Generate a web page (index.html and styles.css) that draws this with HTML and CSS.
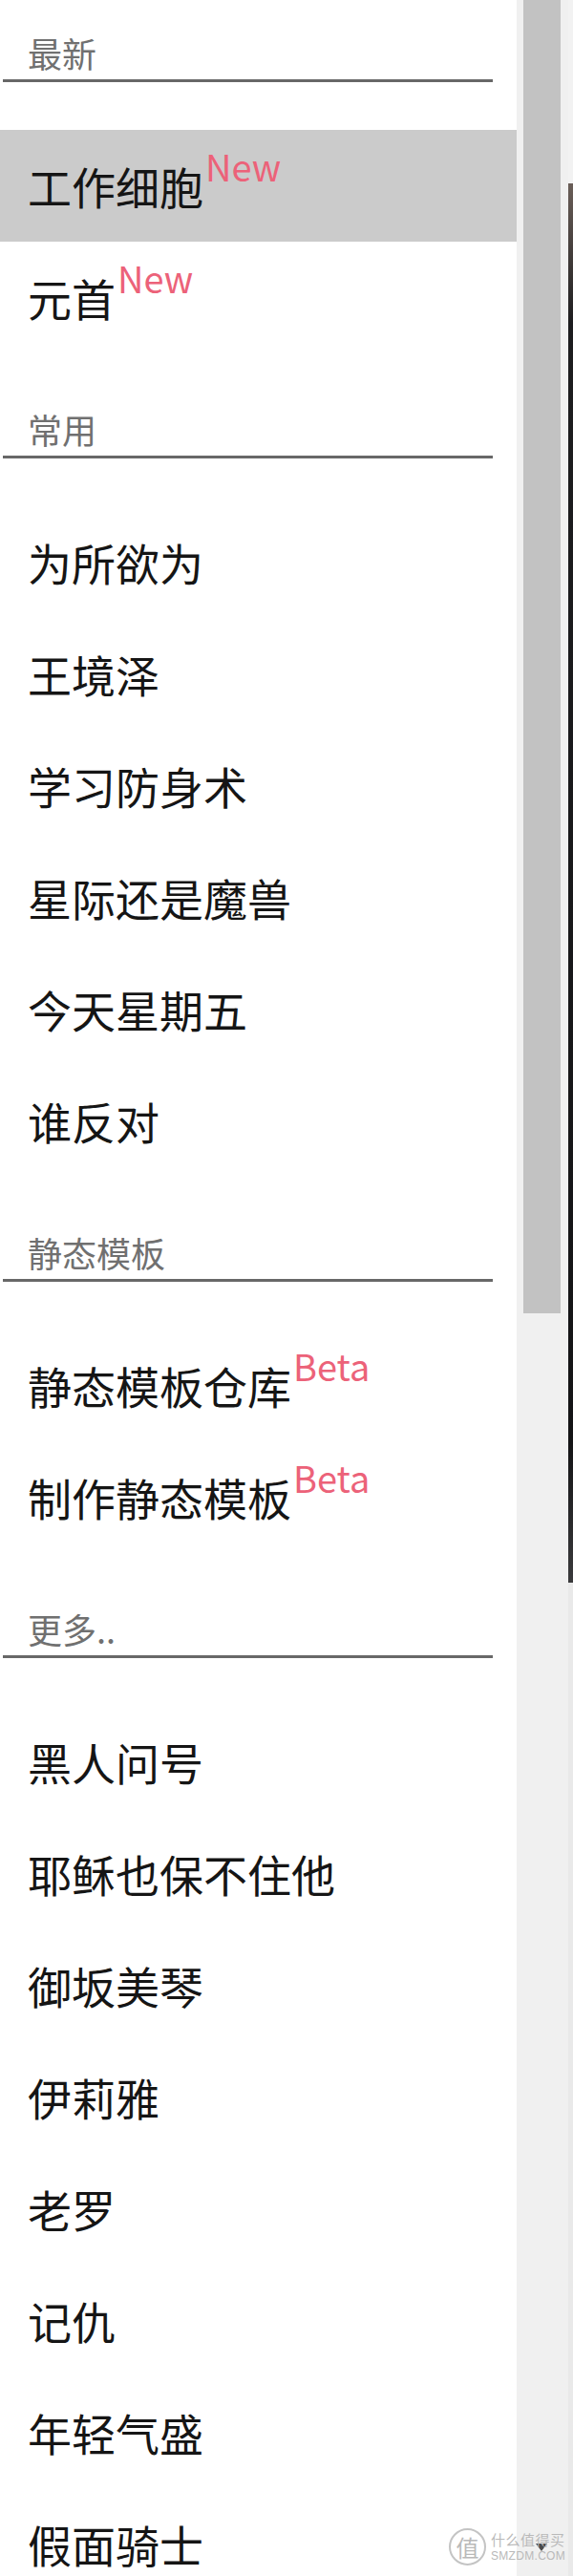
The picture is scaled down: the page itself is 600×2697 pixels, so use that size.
FILE: index.html
```html
<!DOCTYPE html>
<html lang="zh-CN">

<head>
    <meta charset="UTF-8">
    <meta name="viewport" content="width=device-width, initial-scale=1.0">
    <title>菜单</title>
    <link rel="stylesheet" href="styles.css">
</head>

<body>

    <div class="menu">
        <div class="group-title first">最新</div>
        <div class="item active">工作细胞<sup class="tag">New</sup></div>
        <div class="item">元首<sup class="tag">New</sup></div>

        <div class="group-title">常用</div>
        <div class="item">为所欲为</div>
        <div class="item">王境泽</div>
        <div class="item">学习防身术</div>
        <div class="item">星际还是魔兽</div>
        <div class="item">今天星期五</div>
        <div class="item">谁反对</div>

        <div class="group-title">静态模板</div>
        <div class="item">静态模板仓库<sup class="tag">Beta</sup></div>
        <div class="item">制作静态模板<sup class="tag">Beta</sup></div>

        <div class="group-title">更多..</div>
        <div class="item">黑人问号</div>
        <div class="item">耶稣也保不住他</div>
        <div class="item">御坂美琴</div>
        <div class="item">伊莉雅</div>
        <div class="item">老罗</div>
        <div class="item">记仇</div>
        <div class="item">年轻气盛</div>
        <div class="item">假面骑士</div>
    </div>

    <!-- 滚动条 -->
    <div class="scrollbar">
        <div class="thumb"></div>
        <div class="arrow"></div>
    </div>

    <!-- 背后页面露出的一条 -->
    <div class="edge">
        <div class="edge-top"></div>
        <div class="edge-dark"></div>
        <div class="edge-rest"></div>
    </div>

    <!-- 水印 -->
    <div class="watermark">
        <span class="wm-logo">值</span>
        <span class="wm-text">
            <span class="wm-cn">什么值得买</span>
            <span class="wm-en">SMZDM.COM</span>
        </span>
    </div>

</body>

</html>
```

FILE: styles.css
```css
html,
body {
    margin: 0;
    height: 2697px;
    overflow: hidden;
    background: #fff;
}

body {
    display: flex;
    position: relative;
    font-family: "Noto Sans CJK SC", "Noto Sans", sans-serif;
}

.menu {
    width: 541px;
    flex: none;
    background: #fff;
}

.group-title {
    margin: 0 25px 50px 3px;
    padding: 51px 0 0 26px;
    height: 56px;
    line-height: 56px;
    font-size: 36px;
    color: #707070;
    border-bottom: 3px solid #686868;
}

.group-title.first {
    padding-top: 27px;
}

.item {
    height: 117px;
    line-height: 117px;
    padding-left: 29px;
    font-size: 46px;
    color: #151515;
    white-space: nowrap;
}

.item.active {
    background-color: #cbcbcb;
}

.tag {
    font-size: 38px;
    line-height: 0;
    vertical-align: 24px;
    margin-left: 2px;
    color: #ec6279;
}

.scrollbar {
    width: 47px;
    flex: none;
    padding-left: 7px;
    background: #f0f0f0;
    display: flex;
    flex-direction: column;
}

.thumb {
    width: 39px;
    height: 1375px;
    background: #c2c2c2;
}

.arrow {
    margin: auto 0 26px 13px;
    width: 0;
    height: 0;
    border-left: 6px solid transparent;
    border-right: 6px solid transparent;
    border-top: 8px solid #4a4a4a;
}

.edge {
    width: 5px;
    flex: none;
    display: flex;
    flex-direction: column;
}

.edge-top {
    height: 192px;
    background: #f2f2f2;
}

.edge-dark {
    height: 1465px;
    background: linear-gradient(#6a5e58, #1d1d1f 10%, #141416 90%, #3a3a3c);
}

.edge-rest {
    flex: 1;
    background: #e9e9e9;
}

.watermark {
    position: absolute;
    left: 470px;
    top: 2647px;
    display: flex;
    align-items: center;
    gap: 5px;
    color: #b9b9b9;
}

.wm-logo {
    width: 35px;
    height: 35px;
    border: 2px solid #c4c4c4;
    border-radius: 50%;
    font-size: 24px;
    line-height: 35px;
    text-align: center;
}

.wm-text {
    display: flex;
    flex-direction: column;
    line-height: 1;
}

.wm-cn {
    font-size: 15px;
    letter-spacing: 0.5px;
}

.wm-en {
    margin-top: 4px;
    font-family: "Liberation Sans", sans-serif;
    font-size: 12px;
    letter-spacing: 0.3px;
}
```
